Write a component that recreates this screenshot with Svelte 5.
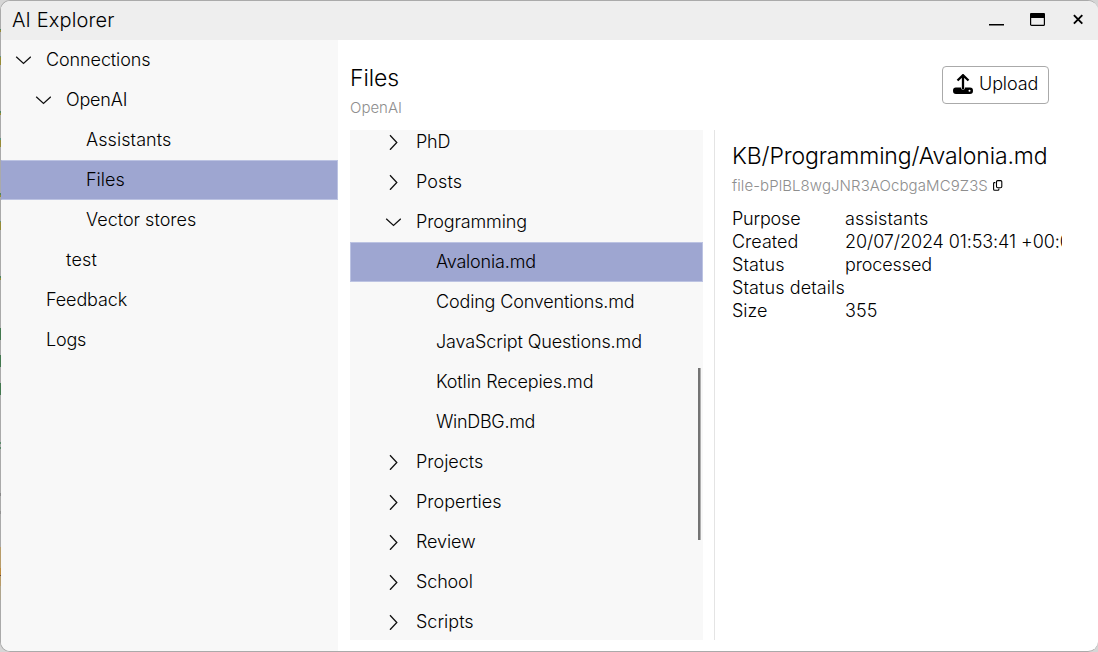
<script>
  const nav = [
    { label: 'Connections', level: 0, arrow: 'down', track: -0.1 },
    { label: 'OpenAI', level: 1, arrow: 'down', track: -0.2 },
    { label: 'Assistants', level: 2, track: 0.08 },
    { label: 'Files', level: 2, selected: true },
    { label: 'Vector stores', level: 2 },
    { label: 'test', level: 1, track: 0.2 },
    { label: 'Feedback', level: 0, track: -0.12 },
    { label: 'Logs', level: 0, track: -0.2 }
  ];
  const files = [
    { label: 'PhD', level: 1, arrow: 'right', track: -0.2 },
    { label: 'Posts', level: 1, arrow: 'right', track: 0.1 },
    { label: 'Programming', level: 1, arrow: 'down', track: -0.14 },
    { label: 'Avalonia.md', level: 2, selected: true, track: -0.18 },
    { label: 'Coding Conventions.md', level: 2, track: -0.16 },
    { label: 'JavaScript Questions.md', level: 2, track: -0.13 },
    { label: 'Kotlin Recepies.md', level: 2, track: -0.12 },
    { label: 'WinDBG.md', level: 2, track: -0.3 },
    { label: 'Projects', level: 1, arrow: 'right' },
    { label: 'Properties', level: 1, arrow: 'right' },
    { label: 'Review', level: 1, arrow: 'right', track: -0.1 },
    { label: 'School', level: 1, arrow: 'right', track: -0.15 },
    { label: 'Scripts', level: 1, arrow: 'right' }
  ];
  const details = [
    ['Purpose', 'assistants', -0.2, 0.1],
    ['Created', '20/07/2024 01:53:41 +00:00', 0, -0.1],
    ['Status', 'processed', 0.1, -0.12],
    ['Status details', '', 0.1, 0],
    ['Size', '355', 0, 0.1]
  ];
</script>

{#snippet row(item)}
  <div class="row l{item.level}" class:selected={item.selected}>
    <span class="arrow">
      {#if item.arrow === 'down'}
        <svg width="16" height="16" viewBox="0 0 16 16"><path d="M1.2 4.8 8.5 11.4l7.3-6.6" /></svg>
      {:else if item.arrow === 'right'}
        <svg width="16" height="16" viewBox="0 0 16 16"><path d="m5 1.2 6.8 7.3L5 15.8" /></svg>
      {/if}
    </span>
    <span style:letter-spacing="{item.track ?? 0}px">{item.label}</span>
  </div>
{/snippet}

<div class="desktop">
  <div class="window">
    <header>
      <span class="title">AI Explorer</span>
      <div class="controls">
        <svg width="15" height="16" viewBox="0 0 15 16"><path d="M0 13.8h15" stroke="#000" stroke-width="1.6" /></svg>
        <svg width="15" height="16" viewBox="0 0 15 16"><rect x=".6" y="3" width="13.8" height="11.4" rx="1" fill="none" stroke="#000" stroke-width="1.2" /><path d="M0 3.2Q0 2 1 2h13q1 0 1 1.2V7H0z" /></svg>
        <svg width="10" height="16" viewBox="0 0 10 16"><path d="m.9 4.2 8.4 8.4m0-8.4L.9 12.6" stroke="#000" stroke-width="1.9" /></svg>
      </div>
    </header>
    <div class="body">
      <nav>{#each nav as item}{@render row(item)}{/each}</nav>
      <main>
        <div class="top">
          <div>
            <h1>Files</h1>
            <p class="sub">OpenAI</p>
          </div>
          <button>
            <svg width="20" height="20" viewBox="0 0 20 20">
              <path d="M3 13.5h5.1v.7q0 1.4 1.9 1.4t1.9-1.4v-.7H17q3 0 3 3.2T17 20H3q-3 0-3-3.3t3-3.2z" />
              <path d="M10 15V2M4.5 6.5 10 1.2l5.5 5.3" fill="none" stroke="#000" stroke-width="2.3" />
              <circle cx="16.5" cy="16.7" r="1" fill="#fff" />
            </svg>
            <span>Upload</span>
          </button>
        </div>
        <div class="panes">
          <div class="tree">
            {#each files as item}{@render row(item)}{/each}
            <i class="thumb"></i>
          </div>
          <section>
            <h2>KB/Programming/Avalonia.md</h2>
            <p class="id">
              <span>file-bPlBL8wgJNR3AOcbgaMC9Z3S</span>
              <svg width="10" height="11" viewBox="0 0 10 11"><rect x="3.5" y=".6" width="5.3" height="7.2" rx="1.2" /><path d="M2.4 2.6H1.3q-.7 0-.7.8v5.8q0 1 1 1H5q.9 0 .9-1v-.6" /></svg>
            </p>
            <dl>
              {#each details as [name, value, nameTrack, valueTrack]}
                <dt style:letter-spacing="{nameTrack}px">{name}</dt>
                <dd style:letter-spacing="{valueTrack}px">{value}</dd>
              {/each}
            </dl>
          </section>
        </div>
      </main>
    </div>
  </div>
  <i class="edge"></i>
</div>

<style>
  :global(body) { margin: 0; overflow: hidden; }
  .desktop {
    position: relative;
    height: 652px;
    box-sizing: border-box;
    background: #d6d6d6;
    font-family: Inter, 'Liberation Sans', sans-serif;
    font-weight: 300;
    font-size: 18px;
    color: #000;
  }
  .window {
    width: 1098px;
    height: 652px;
    box-sizing: border-box;
    border: 1px solid #aaa;
    border-right-width: 0;
    border-radius: 10px;
    overflow: hidden;
    background: #fff;
    display: flex;
    flex-direction: column;
  }
  .edge {
    position: absolute;
    left: 0;
    top: 0;
    width: 1px;
    height: 652px;
    background: linear-gradient(
      transparent 29px, #4f8560 29px 30px, #968b36 30px 32px, transparent 32px 56px,
      #5d9280 56px 57px, #968b36 57px 65px, transparent 65px 111px,
      #4f8560 111px 113px, #968b36 113px 115px, transparent 115px 138px,
      #5d9280 138px 140px, #968b36 140px 147px, transparent 147px 193px,
      #4f8560 193px 195px, #968b36 195px 197px, transparent 197px 221px,
      #5d9280 221px 222px, #968b36 222px 230px, transparent 230px 276px,
      #4f8560 276px 278px, #968b36 278px 280px, transparent 280px 328px,
      #42784e 328px 340px, transparent 340px 355px,
      #42784e 355px 367px, transparent 367px 383px,
      #42784e 383px 395px, transparent 395px 442px,
      #5a8a69 442px 444px, transparent 444px 447px,
      #5a8a69 447px 449px, transparent 449px 493px,
      #888 493px 496px, transparent 496px 511px,
      #929292 511px 514px, transparent 514px 547px,
      #b89c69 547px 568px, #bd8a3c 568px 575px, #6e4c36 575px 576px,
      #b89b68 576px 586px, #afa58d 586px 600px, transparent 600px
    );
  }
  header {
    flex: 0 0 39px;
    background: #eee;
    display: flex;
    align-items: flex-start;
    justify-content: space-between;
    padding: 0 15px 0 11px;
  }
  .title { font-size: 20px; line-height: 39px; letter-spacing: .13px; }
  .controls { display: flex; align-items: center; padding-top: 10px; }
  .controls svg { margin-left: 26px; }
  .controls svg:last-child { margin-left: 28px; }
  .body { flex: 1; display: flex; min-height: 0; }
  nav { width: 337px; background: #f8f8f8; }
  .row {
    height: 40px;
    flex-shrink: 0;
    box-sizing: border-box;
    border: 1px solid transparent;
    display: flex;
    align-items: center;
    line-height: 38px;
    white-space: pre;
  }
  .row.selected { background: #9ea6d1; border-color: #bcc3e2; }
  nav .row.selected { border-left-color: #9ea6d1; }
  .l0 { padding-left: 13px; }
  .l1 { padding-left: 33px; }
  .l2 { padding-left: 53px; }
  .tree .l1 { padding-left: 34px; }
  .tree .l2 { padding-left: 54px; }
  .arrow { width: 31px; height: 16px; display: flex; }
  .arrow path { fill: none; stroke: #111; stroke-width: 1.3; }
  main { flex: 1; min-width: 0; padding: 0 0 0 12px; display: flex; flex-direction: column; }
  .top {
    height: 90px;
    box-sizing: border-box;
    padding: 24px 49px 0 0;
    display: flex;
    justify-content: space-between;
    align-items: flex-start;
  }
  h1, h2, p, dl, dd { margin: 0; font-weight: 300; }
  h1 { font-size: 23px; line-height: 28px; letter-spacing: -.1px; }
  .sub { font-size: 15px; line-height: 18px; margin-top: 7px; color: #8e8e8e; }
  button {
    width: 107px;
    height: 38px;
    margin-top: 2px;
    padding: 0 0 2px 10px;
    box-sizing: border-box;
    border: 1px solid #aaa;
    border-radius: 4px;
    background: #fff;
    font: inherit;
    color: #000;
    display: flex;
    align-items: center;
    gap: 6px;
  }
  button span { padding-bottom: 2px; letter-spacing: -.12px; }
  .panes { display: flex; height: 510px; }
  .tree {
    position: relative;
    width: 353px;
    background: #f8f8f8;
    overflow: hidden;
    display: flex;
    flex-direction: column;
    justify-content: flex-end;
  }
  .tree .row:nth-last-child(2) { margin-bottom: -2px; }
  .thumb {
    position: absolute;
    right: 2px;
    top: 238px;
    width: 3px;
    height: 172px;
    background: linear-gradient(90deg, #747474 2px, #b0b0b0 2px);
  }
  section {
    margin-left: 11px;
    border-left: 1px solid #e4e4e4;
    padding: 12px 0 0 17px;
    width: 330px;
  }
  h2 { font-size: 23px; line-height: 28px; white-space: nowrap; letter-spacing: -.14px; }
  .id { display: flex; align-items: center; gap: 5px; font-size: 15px; line-height: 18px; margin-top: 7px; color: #8e8e8e; letter-spacing: .08px; }
  .id svg { fill: none; stroke: #000; stroke-width: 1.1; margin-bottom: 2px; }
  dl {
    display: grid;
    grid-template-columns: 113px 1fr;
    line-height: 23px;
    margin-top: 12px;
    white-space: nowrap;
  }
  dd { overflow: hidden; min-width: 0; }
</style>
